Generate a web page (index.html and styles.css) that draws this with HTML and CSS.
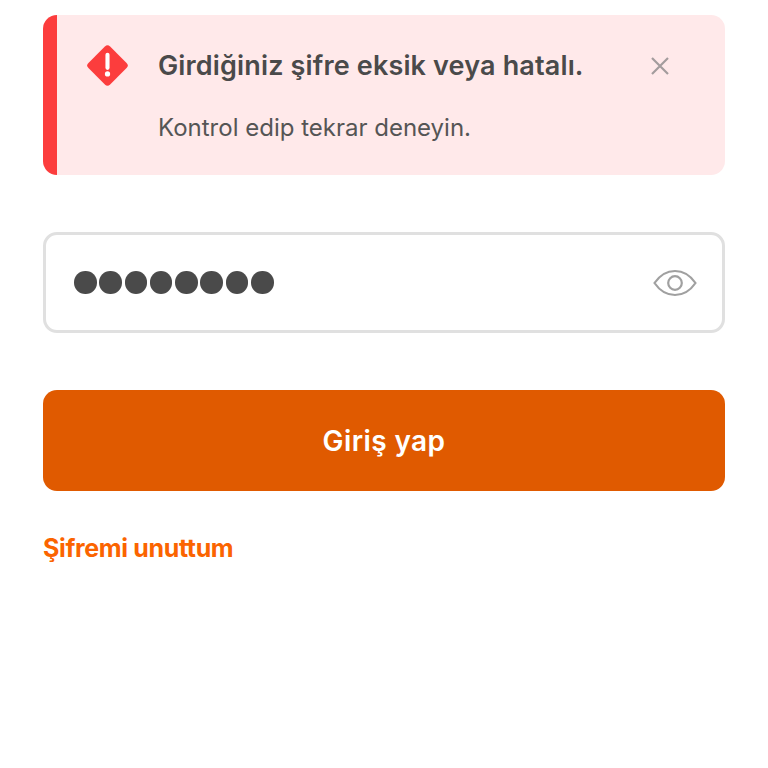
FILE: index.html
```html
<!DOCTYPE html>
<html lang="tr">
<head>
<meta charset="utf-8">
<title>Giriş</title>
<link rel="stylesheet" href="styles.css">
</head>
<body>
<main class="page">
  <section class="alert">
    <div class="alert-icon">
      <svg width="43" height="43" viewBox="0 0 46 46"><path d="M20.2 2.6a4 4 0 0 1 5.6 0l17.6 17.6a4 4 0 0 1 0 5.6L25.8 43.4a4 4 0 0 1-5.6 0L2.6 25.8a4 4 0 0 1 0-5.6z" fill="#fc3d3d"/><path d="M23 11.5v14" stroke="#fff" stroke-width="4.4" stroke-linecap="round" fill="none"/><circle cx="23" cy="32" r="2.8" fill="#fff"/></svg>
    </div>
    <div class="alert-body">
      <div class="alert-head">
        <h1 class="alert-title">Girdiğiniz şifre eksik veya hatalı.</h1>
        <svg class="alert-close" width="20" height="20" viewBox="0 0 20 20"><path d="M2 2l16 16M18 2L2 18" stroke="#a39c9d" stroke-width="2.2" fill="none"/></svg>
      </div>
      <p class="alert-text">Kontrol edip tekrar deneyin.</p>
    </div>
  </section>
  <div class="field">
    <div class="dots"><span></span><span></span><span></span><span></span><span></span><span></span><span></span><span></span></div>
    <svg width="44" height="30" viewBox="0 0 44 30"><path d="M1.5 15C7 7 14 3 22 3s15 4 20.500 12C37 23 30 27 22 27S7 23 1.500 15z" stroke="#a0a0a0" stroke-width="2.200" fill="none"/><circle cx="22" cy="15" r="6.800" stroke="#a0a0a0" stroke-width="2.200" fill="none"/></svg>
  </div>
  <button class="submit" type="button">Giriş yap</button>
  <a class="forgot" href="#">Şifremi unuttum</a>
</main>
</body>
</html>
```
FILE: styles.css
```css
* { box-sizing: border-box; }
html, body { margin: 0; background: #fff; }
body { font-family: Inter, "Noto Sans", sans-serif; }
.page { display: flex; flex-direction: column; align-items: stretch; padding: 15px 43px 0; }
.alert { display: flex; height: 160px; background: #ffe9ea; border-left: 14px solid #fc3d3d; border-radius: 14px; padding: 29px 0 0 29px; }
.alert-icon { width: 43px; height: 44px; flex: none; }
.alert-body { margin-left: 29px; flex: 1; }
.alert-head { display: flex; align-items: center; height: 43px; }
.alert-title { margin: 0; font-size: 27px; font-weight: 600; color: #4a4a4a; letter-spacing: 0.15px; white-space: nowrap; }
.alert-close { margin-left: 66px; flex: none; }
.alert-text { margin: 25px 0 0; font-size: 24px; line-height: 32px; color: #555; white-space: nowrap; }
.field { display: flex; align-items: center; justify-content: space-between; height: 101px; margin-top: 57px; border: 3px solid #e0e0e0; border-radius: 14px; padding: 0 25px 0 28px; }
.dots { display: flex; gap: 2.8px; }
.dots span { width: 22.5px; height: 22.5px; border-radius: 50%; background: #4a4a4a; }
.submit { height: 101px; margin-top: 57px; background: #e05a00; border: 0; border-radius: 14px; color: #fff; font: 600 28px Inter, sans-serif; letter-spacing: 0.4px; }
.forgot { margin-top: 41px; font-size: 25px; line-height: 32px; font-weight: 700; color: #fb6400; text-decoration: none; letter-spacing: -0.35px; }
```
